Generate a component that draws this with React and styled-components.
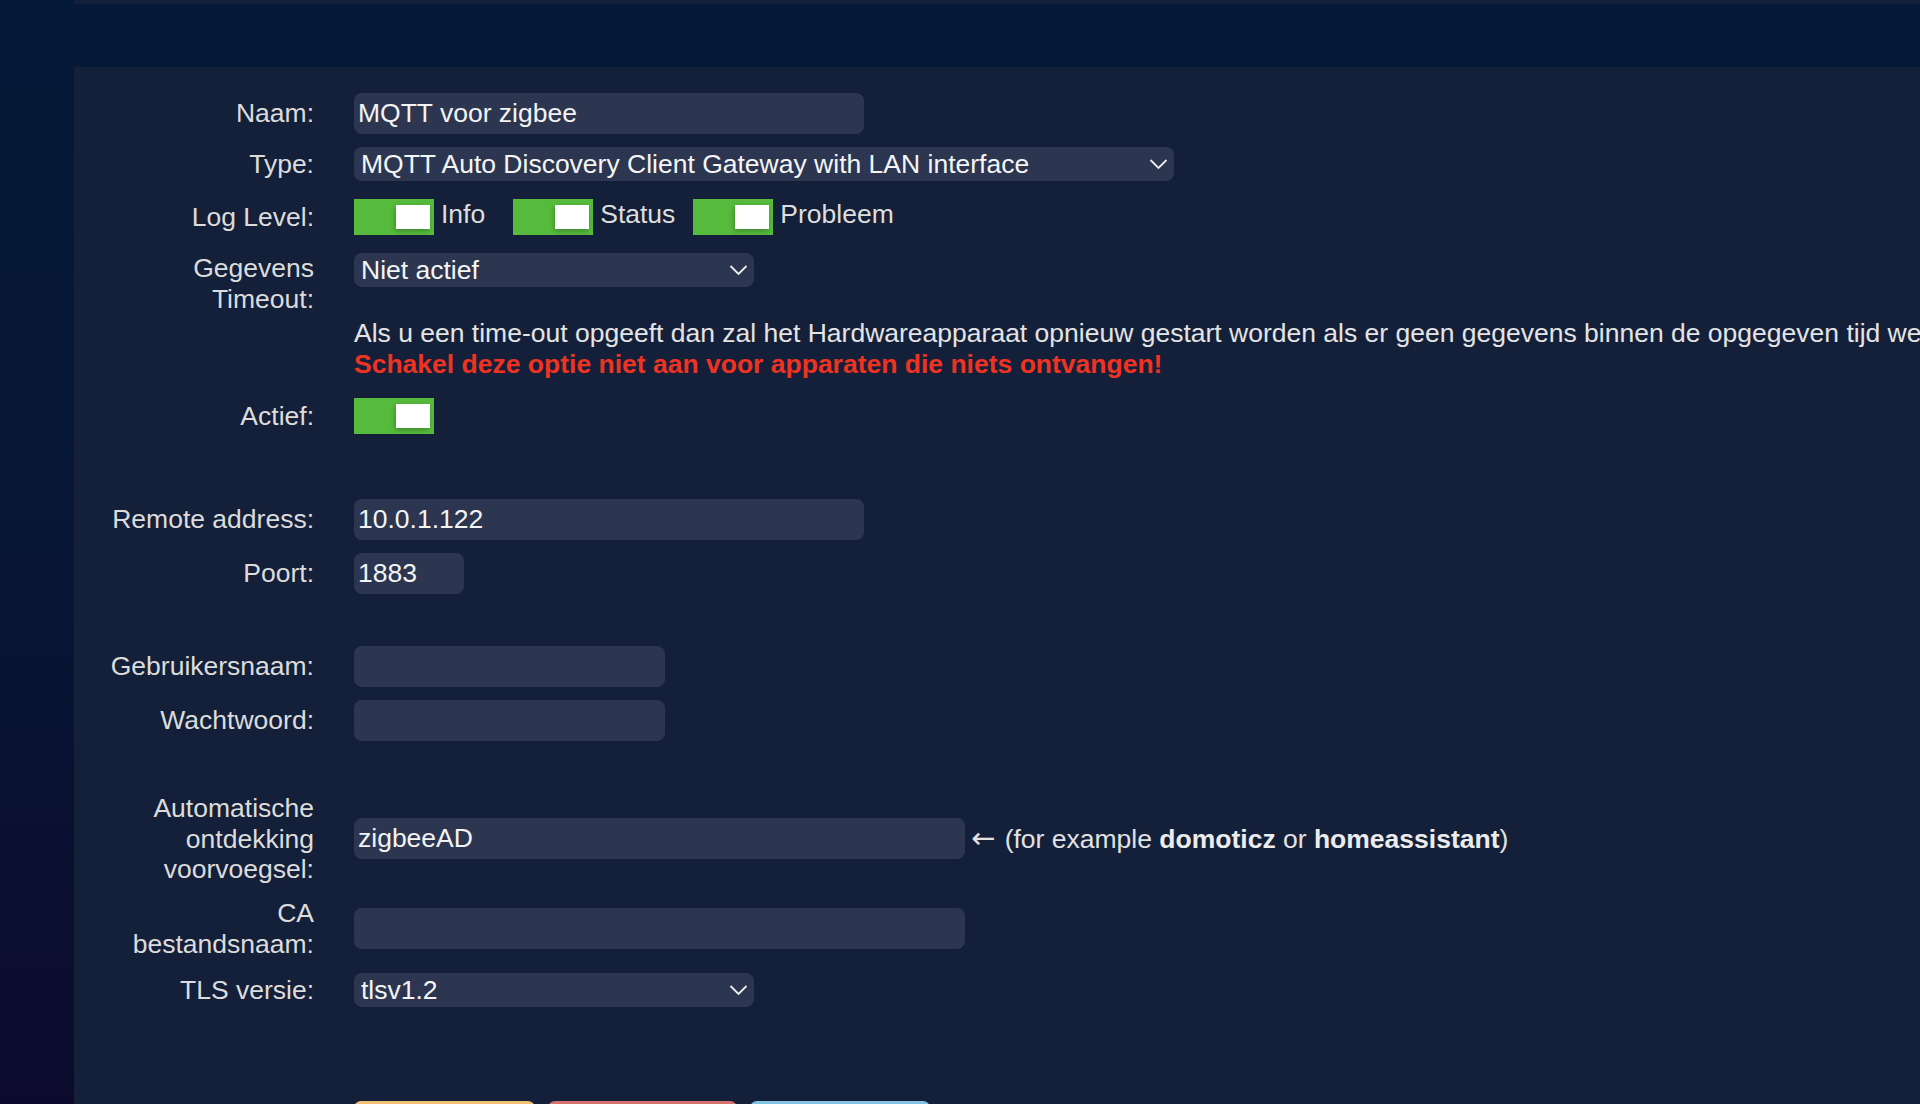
import React from 'react';
import styled, { createGlobalStyle } from 'styled-components';

const GlobalStyle = createGlobalStyle`
  html, body {
    margin: 0;
    padding: 0;
    overflow: hidden;
  }
  body {
    background: linear-gradient(180deg, #051a38 0%, #071735 45%, #0c0b2d 100%);
    font-family: "Liberation Sans", Arial, Helvetica, sans-serif;
    color: #dedede;
  }
`;

const Page = styled.div`
  height: 1104px;
  box-sizing: border-box;
  padding-left: 74px;
  display: flex;
  flex-direction: column;
`;

const TopEdge = styled.div`
  height: 4px;
  flex-shrink: 0;
  background: #141f3a;
`;

const Panel = styled.main`
  margin-top: 63px;
  flex: 1;
  min-height: 0;
  background: #142039;
  overflow: hidden;
  padding: 26px 0 0 28px;
  font-size: 26.5px;
  line-height: 30.5px;
`;

const Row = styled.div`
  display: flex;
  align-items: ${(p) => p.$align || 'center'};
  margin-top: ${(p) => (p.$mt === undefined ? 13 : p.$mt)}px;
  &:first-child {
    margin-top: 0;
  }
`;

const Label = styled.label`
  width: 212px;
  flex-shrink: 0;
  text-align: right;
  color: #dcdcdc;
  padding-top: ${(p) => p.$pt || 0}px;
`;

const Control = styled.div`
  margin-left: 40px;
  min-width: 0;
  display: flex;
  flex-direction: ${(p) => (p.$column ? 'column' : 'row')};
  align-items: ${(p) => (p.$column ? 'flex-start' : 'center')};
`;

const TextInput = styled.input`
  box-sizing: border-box;
  width: ${(p) => p.$w}px;
  height: 41px;
  padding: 0 4px;
  border: none;
  border-radius: 8px;
  background: #2c3650;
  color: #f3f3f3;
  font: inherit;
  outline: none;
`;

const SelectWrap = styled.div`
  position: relative;
  width: ${(p) => p.$w}px;
  height: 34px;
`;

const Select = styled.select`
  appearance: none;
  -webkit-appearance: none;
  box-sizing: border-box;
  width: 100%;
  height: 100%;
  padding: 0 32px 0 7px;
  border: none;
  border-radius: 8px;
  background: #2c3650;
  color: #f5f5f5;
  font: inherit;
  outline: none;
`;

const Chevron = styled.svg`
  position: absolute;
  right: 6px;
  top: 50%;
  transform: translateY(-50%);
  pointer-events: none;
`;

const SwitchGroup = styled.div`
  display: flex;
  align-items: flex-start;
`;

const Switch = styled.span`
  position: relative;
  display: inline-block;
  flex-shrink: 0;
  width: 80px;
  height: 36px;
  background: #56bb3c;
  &::after {
    content: '';
    position: absolute;
    top: 6px;
    right: 4px;
    width: 34px;
    height: 24px;
    background: #ffffff;
    box-shadow: -1px 2px 5px rgba(0, 0, 0, 0.28);
  }
`;

const SwitchText = styled.span`
  margin-left: 7px;
  margin-right: ${(p) => p.$after || 0}px;
  color: #dedede;
  line-height: 30.5px;
`;

const Help = styled.div`
  margin-top: 31px;
  white-space: nowrap;
  color: #e4e4e4;
`;

const Warn = styled.div`
  color: #ee3322;
  font-weight: bold;
`;

const Hint = styled.span`
  margin-left: 6px;
  white-space: nowrap;
  color: #e2e2e2;
  b {
    font-weight: bold;
    color: #ececec;
  }
`;

const Arrow = styled.span`
  font-family: "DejaVu Sans", sans-serif;
  font-size: 29px;
  margin-right: 2px;
`;

const ButtonBar = styled.div`
  display: flex;
  gap: 13px;
  margin-top: 94px;
  margin-left: 252px;
`;

const Button = styled.button`
  width: ${(p) => p.$w}px;
  height: 42px;
  border: none;
  border-radius: 7px;
  background: ${(p) => p.$bg};
  color: #1b2236;
  font: inherit;
  font-size: 22px;
`;

function DropDown({ width, value, options }) {
  return (
    <SelectWrap $w={width}>
      <Select defaultValue={value}>
        {options.map((o) => (
          <option key={o}>{o}</option>
        ))}
      </Select>
      <Chevron width="19" height="11" viewBox="0 0 19 11">
        <polyline points="1.5,1.5 9.5,9.5 17.5,1.5" fill="none" stroke="#ececec" strokeWidth="1.8" />
      </Chevron>
    </SelectWrap>
  );
}

export default function App() {
  return (
    <>
      <GlobalStyle />
      <Page>
        <TopEdge />
        <Panel>
          <Row $mt={0}>
            <Label>Naam:</Label>
            <Control>
              <TextInput $w={510} defaultValue="MQTT voor zigbee" />
            </Control>
          </Row>
          <Row>
            <Label>Type:</Label>
            <Control>
              <DropDown
                width={820}
                value="MQTT Auto Discovery Client Gateway with LAN interface"
                options={['MQTT Auto Discovery Client Gateway with LAN interface', 'MQTT Client Gateway with LAN interface']}
              />
            </Control>
          </Row>
          <Row $mt={18}>
            <Label>Log Level:</Label>
            <Control>
              <SwitchGroup>
                <Switch />
                <SwitchText $after={28}>Info</SwitchText>
                <Switch />
                <SwitchText $after={18}>Status</SwitchText>
                <Switch />
                <SwitchText>Probleem</SwitchText>
              </SwitchGroup>
            </Control>
          </Row>
          <Row $mt={18} $align="flex-start">
            <Label $pt={0}>Gegevens Timeout:</Label>
            <Control $column>
              <DropDown width={400} value="Niet actief" options={['Niet actief', '1 minuut', '5 minuten', '1 uur']} />
              <Help>
                Als u een time-out opgeeft dan zal het Hardwareapparaat opnieuw gestart worden als er geen gegevens binnen de opgegeven tijd werden ontvangen.
                <Warn>Schakel deze optie niet aan voor apparaten die niets ontvangen!</Warn>
              </Help>
            </Control>
          </Row>
          <Row $mt={19}>
            <Label>Actief:</Label>
            <Control>
              <Switch />
            </Control>
          </Row>
          <Row $mt={65}>
            <Label>Remote address:</Label>
            <Control>
              <TextInput $w={510} defaultValue="10.0.1.122" />
            </Control>
          </Row>
          <Row>
            <Label>Poort:</Label>
            <Control>
              <TextInput $w={110} defaultValue="1883" />
            </Control>
          </Row>
          <Row $mt={52}>
            <Label>Gebruikersnaam:</Label>
            <Control>
              <TextInput $w={311} defaultValue="" />
            </Control>
          </Row>
          <Row>
            <Label>Wachtwoord:</Label>
            <Control>
              <TextInput $w={311} type="password" defaultValue="" />
            </Control>
          </Row>
          <Row $mt={52}>
            <Label>Automatische ontdekking voorvoegsel:</Label>
            <Control>
              <TextInput $w={611} defaultValue="zigbeeAD" />
              <Hint>
                <Arrow>←</Arrow> (for example <b>domoticz</b> or <b>homeassistant</b>)
              </Hint>
            </Control>
          </Row>
          <Row $mt={13.5}>
            <Label>CA bestandsnaam:</Label>
            <Control>
              <TextInput $w={611} defaultValue="" />
            </Control>
          </Row>
          <Row $mt={14}>
            <Label>TLS versie:</Label>
            <Control>
              <DropDown width={400} value="tlsv1.2" options={['tlsv1', 'tlsv1.1', 'tlsv1.2']} />
            </Control>
          </Row>
          <ButtonBar>
            <Button $w={181} $bg="#f0c074" aria-label="Bijwerken" />
            <Button $w={189} $bg="#d9716f" aria-label="Verwijderen" />
            <Button $w={180} $bg="#82c3e1" aria-label="Annuleren" />
          </ButtonBar>
        </Panel>
      </Page>
    </>
  );
}
